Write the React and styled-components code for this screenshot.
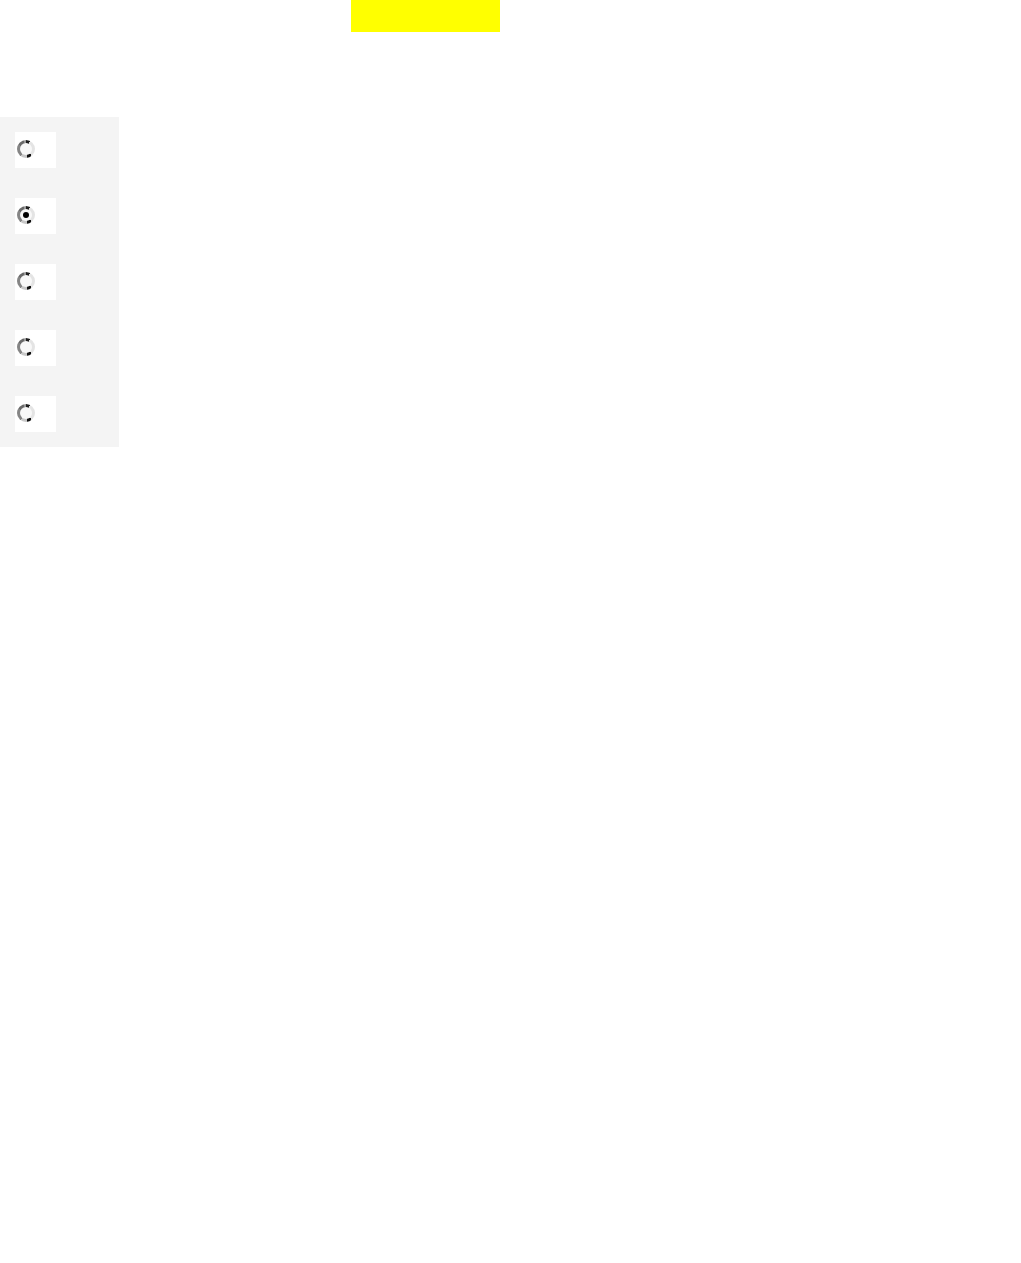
import React from "react";
import styled, { createGlobalStyle } from "styled-components";

const Global = createGlobalStyle`
  html, body { margin: 0; padding: 0; background: #ffffff; font-family: "Liberation Sans", Arial, sans-serif; }
`;

const Page = styled.div`
  display: flex;
  flex-direction: column;
  align-items: flex-start;
`;

const Banner = styled.div`
  margin-left: 351px;
  width: 149px;
  height: 32px;
  background: #ffff00;
`;

const Panel = styled.div`
  margin-top: 85px;
  width: 119px;
  box-sizing: border-box;
  padding: 15px;
  background: #f4f4f4;
  display: flex;
  flex-direction: column;
  gap: 30px;
`;

const Option = styled.label`
  display: flex;
  align-items: flex-start;
  width: 41px;
  height: 36px;
  box-sizing: border-box;
  padding: 8px 0 0 2px;
  background: #ffffff;
`;

const Radio = styled.input.attrs({ type: "radio" })`
  appearance: none;
  -webkit-appearance: none;
  margin: 0;
  width: 18px;
  height: 18px;
  border-radius: 50%;
  position: relative;
  background: conic-gradient(
    #1e1e1e 0deg 28deg,
    #e4e4e4 28deg 140deg,
    #111111 140deg 170deg,
    #c8c8c8 170deg 215deg,
    #858585 215deg 300deg,
    #6a6a6a 300deg 345deg,
    #9a9a9a 345deg 360deg
  );
  &::before {
    content: "";
    position: absolute;
    left: 3px;
    top: 3px;
    width: 12px;
    height: 12px;
    border-radius: 50%;
    background: #f8f8f8;
  }
  &:checked::after {
    content: "";
    position: absolute;
    left: 6px;
    top: 6px;
    width: 6px;
    height: 6px;
    border-radius: 50%;
    background: #000000;
  }
`;

export default function App() {
  const options = [0, 1, 2, 3, 4];
  return (
    <Page>
      <Global />
      <Banner />
      <Panel>
        {options.map((i) => (
          <Option key={i}>
            <Radio name="choice" defaultChecked={i === 1} />
          </Option>
        ))}
      </Panel>
    </Page>
  );
}
